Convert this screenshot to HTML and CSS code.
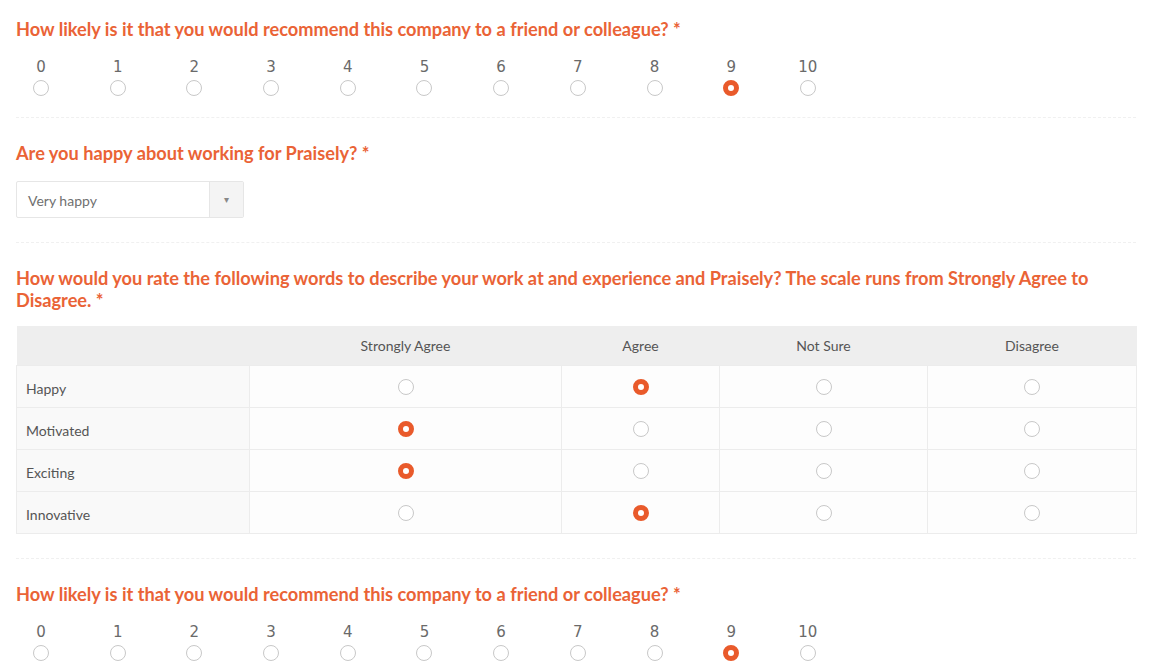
FILE: index.html
```html
<!DOCTYPE html>
<html lang="en">
<head>
<meta charset="UTF-8">
<meta name="viewport" content="width=device-width, initial-scale=1.0">
<title>Employee Survey</title>
<link rel="stylesheet" href="styles.css">
</head>
<body>
<div class="survey">
    <div class="question">
        <h2 class="question-title">How likely is it that you would recommend this company to a friend or colleague? *</h2>
        <div class="scale">
            <label class="scale-item"><span>0</span><input type="radio" name="nps1"></label>
            <label class="scale-item"><span>1</span><input type="radio" name="nps1"></label>
            <label class="scale-item"><span>2</span><input type="radio" name="nps1"></label>
            <label class="scale-item"><span>3</span><input type="radio" name="nps1"></label>
            <label class="scale-item"><span>4</span><input type="radio" name="nps1"></label>
            <label class="scale-item"><span>5</span><input type="radio" name="nps1"></label>
            <label class="scale-item"><span>6</span><input type="radio" name="nps1"></label>
            <label class="scale-item"><span>7</span><input type="radio" name="nps1"></label>
            <label class="scale-item"><span>8</span><input type="radio" name="nps1"></label>
            <label class="scale-item"><span>9</span><input type="radio" name="nps1" checked></label>
            <label class="scale-item"><span>10</span><input type="radio" name="nps1"></label>
        </div>
    </div>

    <div class="question">
        <h2 class="question-title">Are you happy about working for Praisely? *</h2>
        <div class="select-box">
            <span class="select-value">Very happy</span>
            <span class="select-arrow">&#9662;</span>
        </div>
    </div>

    <div class="question">
        <h2 class="question-title">How would you rate the following words to describe your work at and experience and Praisely? The scale runs from Strongly Agree to Disagree. *</h2>
        <table class="matrix">
            <thead>
                <tr>
                    <th class="col-label"></th>
                    <th class="col-a">Strongly Agree</th>
                    <th class="col-b">Agree</th>
                    <th class="col-c">Not Sure</th>
                    <th class="col-d">Disagree</th>
                </tr>
            </thead>
            <tbody>
                <tr>
                    <td class="row-label">Happy</td>
                    <td><input type="radio" name="happy"></td>
                    <td><input type="radio" name="happy" checked></td>
                    <td><input type="radio" name="happy"></td>
                    <td><input type="radio" name="happy"></td>
                </tr>
                <tr>
                    <td class="row-label">Motivated</td>
                    <td><input type="radio" name="motivated" checked></td>
                    <td><input type="radio" name="motivated"></td>
                    <td><input type="radio" name="motivated"></td>
                    <td><input type="radio" name="motivated"></td>
                </tr>
                <tr>
                    <td class="row-label">Exciting</td>
                    <td><input type="radio" name="exciting" checked></td>
                    <td><input type="radio" name="exciting"></td>
                    <td><input type="radio" name="exciting"></td>
                    <td><input type="radio" name="exciting"></td>
                </tr>
                <tr>
                    <td class="row-label">Innovative</td>
                    <td><input type="radio" name="innovative"></td>
                    <td><input type="radio" name="innovative" checked></td>
                    <td><input type="radio" name="innovative"></td>
                    <td><input type="radio" name="innovative"></td>
                </tr>
            </tbody>
        </table>
    </div>

    <div class="question">
        <h2 class="question-title">How likely is it that you would recommend this company to a friend or colleague? *</h2>
        <div class="scale">
            <label class="scale-item"><span>0</span><input type="radio" name="nps2"></label>
            <label class="scale-item"><span>1</span><input type="radio" name="nps2"></label>
            <label class="scale-item"><span>2</span><input type="radio" name="nps2"></label>
            <label class="scale-item"><span>3</span><input type="radio" name="nps2"></label>
            <label class="scale-item"><span>4</span><input type="radio" name="nps2"></label>
            <label class="scale-item"><span>5</span><input type="radio" name="nps2"></label>
            <label class="scale-item"><span>6</span><input type="radio" name="nps2"></label>
            <label class="scale-item"><span>7</span><input type="radio" name="nps2"></label>
            <label class="scale-item"><span>8</span><input type="radio" name="nps2"></label>
            <label class="scale-item"><span>9</span><input type="radio" name="nps2" checked></label>
            <label class="scale-item"><span>10</span><input type="radio" name="nps2"></label>
        </div>
    </div>
</div>
</body>
</html>
```

FILE: styles.css
```css
body {
    font-family: Lato, "Open Sans", sans-serif;
    background-color: #fff;
    color: #555;
    margin: 0;
    padding: 0;
}
.survey {
    width: 1120px;
    padding: 18px 0 0 16px;
}
.question {
    padding: 24px 0;
    border-bottom: 1px dashed #f0f0f0;
}
.question:first-child {
    padding-top: 0;
    padding-bottom: 21px;
}
.question-title {
    margin: 0 0 17px 0;
    font-size: 18.2px;
    line-height: 22px;
    font-weight: 700;
    color: #ea6336;
}

/* radios */
input[type="radio"] {
    -webkit-appearance: none;
    appearance: none;
    width: 16px;
    height: 16px;
    margin: 0;
    border: 1px solid #c8c8c8;
    border-radius: 50%;
    background-color: #fff;
    box-sizing: border-box;
    display: block;
    cursor: pointer;
}
input[type="radio"]:checked {
    border: 5px solid #e95a2b;
    background-color: #fff;
}

/* 0-10 scale */
.scale {
    display: flex;
    gap: 26.7px;
    margin-top: 18px;
}
.scale-item {
    width: 50px;
    display: flex;
    flex-direction: column;
    align-items: center;
    gap: 4px;
}
.scale-item span {
    font-family: "DejaVu Sans", Verdana, sans-serif;
    font-size: 15px;
    line-height: 18px;
    color: #6a6a6a;
}

/* dropdown */
.select-box {
    width: 226px;
    height: 35px;
    border: 1px solid #e6e6e6;
    display: flex;
    align-items: stretch;
    border-radius: 2px;
}
.select-value {
    flex: 1;
    padding-left: 11px;
    font-size: 14px;
    line-height: 37px;
    color: #707070;
}
.select-arrow {
    width: 33px;
    background-color: #f4f4f4;
    border-left: 1px solid #e6e6e6;
    text-align: center;
    font-size: 10px;
    line-height: 35px;
    color: #888;
}

/* matrix table */
.matrix {
    width: 1120px;
    margin-top: -2px;
    border-collapse: collapse;
    table-layout: fixed;
    font-size: 14px;
}
.matrix th {
    background-color: #eeeeee;
    height: 39px;
    font-weight: 400;
    color: #555;
    padding: 0;
}
.col-label { width: 233px; }
.col-a { width: 312px; }
.col-b { width: 158px; }
.col-c { width: 208px; }
.col-d { width: 209px; }
.matrix td {
    height: 41px;
    border: 1px solid #ececec;
    background-color: #fdfdfd;
    padding: 0;
}
.matrix td input {
    margin: 0 auto;
}
.matrix .row-label {
    height: 37px;
    padding: 4px 0 0 9px;
    background-color: #f9f9f9;
    color: #555;
}
```
